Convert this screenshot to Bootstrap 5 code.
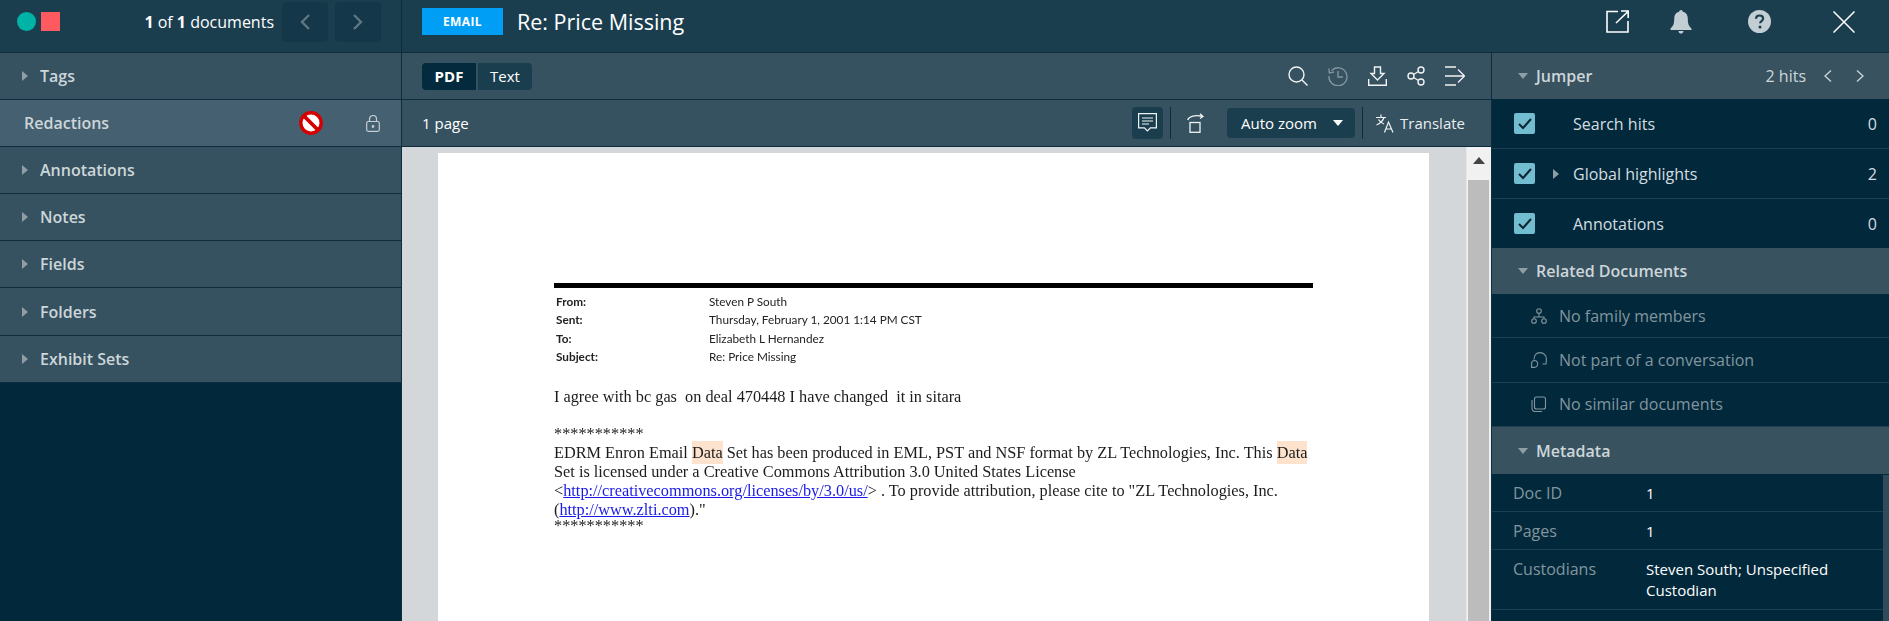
<!DOCTYPE html>
<html lang="en">
<head>
<meta charset="utf-8">
<title>Re: Price Missing</title>
<link href="https://cdn.jsdelivr.net/npm/bootstrap@5.3.0/dist/css/bootstrap.min.css" rel="stylesheet">
<style>
html,body{height:100%;overflow:hidden}
body{background:#02293b;font-family:"Open Sans","Noto Sans",sans-serif;font-size:16px;color:#fff}
svg{display:block;flex:none}
.app-top{height:53px;background:#1b3e4f;border-bottom:1px solid #0c2d3e}
.top-cell{height:52px;padding-bottom:9px}
.app-main{height:568px}
.col-left{width:402px;border-right:1px solid #0c2d3e;flex:none}
.col-mid{width:1090px;flex:none;border-right:1px solid #0c2d3e}
.col-right{width:397px;flex:none}
.logo-dot{width:19px;height:19px;border-radius:50%;background:#00b3a7;margin-left:17px}
.logo-sq{width:19px;height:19px;background:#ff5a60;margin-left:5px}
.pager{width:46px;height:40px;background:#15374a;border-radius:4px;border:0;padding:0}
.doc-type{width:81px;height:27px;background:#009ff5;font-size:12px;font-weight:700;letter-spacing:.4px}
.doc-title{font-size:21.5px;margin:0;font-weight:400;line-height:1}
.side-row{height:47.1px;background:#36515f;border-bottom:1px solid #0c2d3e;color:#cdd6da;font-weight:600;font-size:16px;padding-left:22px}
.side-row.is-active{background:#456070;padding-left:24px}
.caret-r{width:0;height:0;border-left:6px solid #8f9ea6;border-top:5.500px solid transparent;border-bottom:5.500px solid transparent;margin-right:12px}
.caret-d{width:0;height:0;border-top:6px solid #8f9ea6;border-left:5px solid transparent;border-right:5px solid transparent;margin-right:8px}
.tool-row{height:47px;background:#36515f;border-bottom:1px solid #0c2d3e}
.seg{height:27px;font-size:15px;color:#fff;width:54px;background:#1b3e4f}
.seg-on{background:#032a3d;font-weight:700;border-radius:4px 0 0 4px;margin-right:2px}
.seg-off{border-radius:0 4px 4px 0}
.cmt-btn{width:31px;height:32px;background:#1b3e4f;border-radius:4px}
.zoom-btn{width:128px;height:30px;background:#1b3e4f;border-radius:4px;padding:0 12px 0 14px;font-size:15px}
.v-div{width:1px;height:32px;background:#0c2d3e}
.viewer{height:474px;background:#d3d7da}
.pdf-page{width:991px;margin:6px 0 0 36px;background:#fff;color:#1c1c1c;padding:130px 0 0 116px;font-family:"Liberation Serif",serif;font-size:16.3px;line-height:19px;height:480px;overflow:hidden;filter:blur(.3px)}
.rule{width:759px;height:5px;background:#000;margin-bottom:5px}
.hdr{font-family:"Lato","Open Sans",sans-serif;font-size:11.75px;line-height:18.3px;color:#222;display:grid;grid-template-columns:153px 1fr;padding-left:2px;margin-bottom:21px}
.hdr b{font-weight:700}
.pdf-page p{margin:0;white-space:nowrap}
.hit{background:#fde3cd;padding:2px 0}
.pdf-page a{color:#1a1ae6}
.sb{width:25px;background:#f1f1f1;border-left:1px solid #e8e8e8}
.sb-btn{height:33px;padding-bottom:6px}
.sb-thumb{flex:1;background:#bcbcbc;margin:0 2px 0 1px}
.sec-head{background:#38525f;color:#cdd6da;font-weight:600;font-size:16px;padding:0 25px 0 26px}
.jump{height:46px}
.jump-row{height:50px;border-bottom:1px solid #1d3f50;color:#d5dde1;font-size:16px;padding:0 12px 0 22px}
.chk{width:21px;height:21px;border-radius:2px;background:#73bdd0;margin-right:16px}
.tw{width:22px}
.caret-s{width:0;height:0;border-left:6px solid #8f9ea6;border-top:5px solid transparent;border-bottom:5px solid transparent;margin-left:2px}
.rel-row{height:44.400px;border-bottom:1px solid #1d3f50;color:#82959f;font-size:16px;padding-left:39px}
.rel-row:last-child{border-bottom:0}
.rel-row svg{margin-right:12px}
.meta-wrap{height:147px;overflow:hidden;position:relative}
.meta-row{display:grid;grid-template-columns:133px 1fr;padding:8px 10px 0 21px;border-bottom:1px solid #1d3f50;font-size:15px;line-height:22px;height:38px;color:#fff}
.meta-row.two{height:60px;line-height:21px;padding-top:9px}
.meta-row span:first-child{color:#82959f;font-size:16px}
.meta-sb{position:absolute;right:0;top:1px;bottom:0;width:6px;background:#2f4c5b}
.hits{color:#cdd6da;font-weight:400;font-size:16px}
</style>
</head>
<body>
<div class="d-flex app-top">
  <div class="col-left d-flex align-items-center top-cell">
    <span class="logo-dot"></span><span class="logo-sq"></span>
    <span class="ms-auto" style="margin-right:8px"><b>1</b> of <b>1</b> documents</span>
    <button class="pager d-flex align-items-center justify-content-center" aria-label="Previous"><svg width="12" height="18" viewBox="0 0 12 18" fill="none" stroke="#5f7783" stroke-width="2.4"><path d="M10 2 3 9l7 7"/></svg></button>
    <button class="pager d-flex align-items-center justify-content-center" style="margin:0 20px 0 7px" aria-label="Next"><svg width="12" height="18" viewBox="0 0 12 18" fill="none" stroke="#5f7783" stroke-width="2.4"><path d="m2 2 7 7-7 7"/></svg></button>
  </div>
  <div class="flex-grow-1 d-flex align-items-center top-cell" style="padding-left:20px">
    <span class="doc-type d-flex align-items-center justify-content-center">EMAIL</span>
    <h1 class="doc-title" style="margin-left:14px">Re: Price Missing</h1>
    <div class="ms-auto d-flex align-items-center" style="margin-right:34px">
      <svg width="23" height="23" viewBox="0 0 23 23" fill="none" stroke="#fff" stroke-width="1.6"><path d="M12 1.5H1v20.500h21V11M10 13 22 1.500M15 1h7.200v7"/></svg>
      <svg style="margin-left:41px" width="22" height="24" viewBox="0 0 22 24" fill="#c3ced4"><path d="M11 0c1 0 1.800.8 1.800 1.800C16 2.500 17.800 5 17.800 8.500c0 5 .8 7.500 3.700 10v1.500H.500v-1.500c3-2.500 3.700-5 3.700-10C4.200 5 6 2.500 9.200 1.800 9.200.8 10 0 11 0zM8.500 21h5c0 1.500-1.100 2.600-2.500 2.600S8.500 22.500 8.500 21z"/></svg>
      <svg style="margin-left:56px" width="23" height="23" viewBox="0 0 23 23"><circle cx="11.500" cy="11.500" r="11.500" fill="#c3ced4"/><path d="M8 8.800c0-2 1.500-3.300 3.600-3.300s3.500 1.200 3.500 3c0 2.600-3 2.500-3 4.800" fill="none" stroke="#1b3e4f" stroke-width="2.200"/><circle cx="12" cy="17" r="1.500" fill="#1b3e4f"/></svg>
      <svg style="margin-left:62px" width="22" height="22" viewBox="0 0 22 22" fill="none" stroke="#fff" stroke-width="1.500"><path d="M.5.500l21 21M21.500.500l-21 21"/></svg>
    </div>
  </div>
</div>
<div class="d-flex app-main">
  <div class="col-left">
    <div class="side-row d-flex align-items-center"><span class="caret-r"></span>Tags</div>
    <div class="side-row is-active d-flex align-items-center">Redactions
      <svg style="margin-left:auto" width="24" height="24" viewBox="0 0 24 24"><circle cx="12" cy="12" r="10.200" fill="#fff" stroke="#d40000" stroke-width="3.400"/><path d="M5 5l14 14" stroke="#d40000" stroke-width="3.800"/></svg>
      <svg style="margin:0 21px 0 43px" width="14" height="17" viewBox="0 0 14 17" fill="none" stroke="#c4ced3" stroke-width="1.200"><rect x=".7" y="6.500" width="12.600" height="9.800" rx="1.500"/><path d="M3.500 6.500V4a3.500 3.500 0 0 1 7 0v2.500"/><circle cx="7" cy="11.500" r=".8" fill="#c4ced3"/></svg>
    </div>
    <div class="side-row d-flex align-items-center"><span class="caret-r"></span>Annotations</div>
    <div class="side-row d-flex align-items-center"><span class="caret-r"></span>Notes</div>
    <div class="side-row d-flex align-items-center"><span class="caret-r"></span>Fields</div>
    <div class="side-row d-flex align-items-center"><span class="caret-r"></span>Folders</div>
    <div class="side-row d-flex align-items-center"><span class="caret-r"></span>Exhibit Sets</div>
  </div>
  <div class="col-mid">
    <div class="tool-row d-flex align-items-center" style="padding-left:20px">
      <span class="seg seg-on d-flex align-items-center justify-content-center">PDF</span>
      <span class="seg seg-off d-flex align-items-center justify-content-center">Text</span>
      <div class="ms-auto d-flex align-items-center" style="margin-right:26px;gap:20px">
        <svg width="20" height="20" viewBox="0 0 20 20" fill="none" stroke="#f0f3f4" stroke-width="1.400"><circle cx="8.500" cy="8.500" r="7.500"/><path d="m14 14 5.500 5.500"/></svg>
        <svg width="20" height="20" viewBox="0 0 20 20" fill="none" stroke="#83959e" stroke-width="1.400"><path d="M3.500 4.500A9 9 0 1 1 1 10M1 2.500l.3 4.500 4.700-1M10 5v6h5"/></svg>
        <svg width="19" height="20" viewBox="0 0 19 20" fill="none" stroke="#f0f3f4" stroke-width="1.400"><path d="M.7 13v6.300h17.600V13M6.500 1h6v6.500h3.500l-6.500 6.500L3 7.500h3.500z"/></svg>
        <svg width="18" height="20" viewBox="0 0 18 20" fill="none" stroke="#f0f3f4" stroke-width="1.400"><circle cx="14" cy="4" r="3"/><circle cx="4" cy="10" r="3"/><circle cx="14" cy="16" r="3"/><path d="m6.500 8.500 5-3M6.500 11.500l5 3"/></svg>
        <svg width="20" height="20" viewBox="0 0 20 20" fill="none" stroke="#f0f3f4" stroke-width="1.300"><path d="M0 1h11M0 10h19M0 19h11M13 3.500l6.500 6.500-6.500 6.500"/></svg>
      </div>
    </div>
    <div class="tool-row d-flex align-items-center" style="padding-left:20px">
      <span style="font-size:15px">1 page</span>
      <div class="ms-auto d-flex align-items-center" style="margin-right:26px">
        <span class="cmt-btn d-flex align-items-center justify-content-center"><svg width="19" height="20" viewBox="0 0 19 20" fill="none" stroke="#f0f3f4" stroke-width="1.200"><path d="M.6.600h17.800v14.300h-6l-3 3-3-3h-5.800zM4 5h11M4 8h11M4 11h7"/></svg></span>
        <span class="v-div" style="margin-left:7px"></span>
        <svg style="margin-left:16px" width="17" height="20" viewBox="0 0 17 20" fill="none" stroke="#f0f3f4" stroke-width="1.300"><rect x="3" y="9.500" width="10" height="9.800"/><path d="M.7 7C2 3.500 8 1.500 15.500 3.500M13 .7l3 2.800-3 2"/></svg>
        <span class="zoom-btn d-flex align-items-center" style="margin-left:23px">Auto zoom<span class="caret-d ms-auto" style="margin-right:0;border-top-color:#fff"></span></span>
        <span class="v-div" style="margin-left:7px"></span>
        <svg style="margin-left:13px" width="18" height="19" viewBox="0 0 18 19" fill="none" stroke="#f0f3f4" stroke-width="1.200"><path d="M0 3.500h10M5 .5v3M8 3.500C7 7 4 9.500.5 11M2.500 5.500c1 2 3 3.500 5.500 4.500M8.500 18.500 12.500 8l4.500 10.500M10 15h6"/></svg>
        <span style="margin-left:6px;font-size:15px;color:#e9eef0">Translate</span>
      </div>
    </div>
    <div class="viewer d-flex">
      <div class="flex-grow-1 overflow-hidden">
        <div class="pdf-page">
          <div class="rule"></div>
          <div class="hdr">
            <b>From:</b><span>Steven P South</span>
            <b>Sent:</b><span>Thursday, February 1, 2001 1:14 PM CST</span>
            <b>To:</b><span>Elizabeth L Hernandez</span>
            <b>Subject:</b><span>Re: Price Missing</span>
          </div>
          <p>I agree with bc gas&nbsp; on deal 470448 I have changed&nbsp; it in sitara</p>
          <p style="margin-top:18px">***********</p>
          <p><span>EDRM Enron Email <span class="hit">Data</span> Set has been produced in EML, PST and NSF format by ZL Technologies, Inc. This <span class="hit">Data</span></span></p>
          <p>Set is licensed under a Creative Commons Attribution 3.0 United States License</p>
          <p>&lt;<a href="#">http://creativecommons.org/licenses/by/3.0/us/</a>&gt; . To provide attribution, please cite to "ZL Technologies, Inc.</p>
          <p>(<a href="#">http://www.zlti.com</a>)."</p>
          <p style="line-height:13px">***********</p>
        </div>
      </div>
      <div class="sb d-flex flex-column">
        <div class="sb-btn d-flex align-items-center justify-content-center"><svg width="12" height="7" viewBox="0 0 12 7" fill="#444"><path d="M6 0l6 7H0z"/></svg></div>
        <div class="sb-thumb"></div>
      </div>
    </div>
  </div>
  <div class="col-right">
    <div class="sec-head jump d-flex align-items-center"><span class="caret-d"></span>Jumper
      <span class="hits ms-auto">2 hits</span>
      <svg style="margin-left:18px" width="8" height="12" viewBox="0 0 8 12" fill="none" stroke="#cdd6da" stroke-width="1.300"><path d="M7 .5 1 6l6 5.500"/></svg>
      <svg style="margin-left:24px" width="8" height="12" viewBox="0 0 8 12" fill="none" stroke="#cdd6da" stroke-width="1.300"><path d="m1 .5 6 5.500-6 5.500"/></svg>
    </div>
    <div class="jump-row d-flex align-items-center"><span class="chk d-flex align-items-center justify-content-center"><svg width="14" height="12" viewBox="0 0 14 12" fill="none" stroke="#0b2533" stroke-width="2"><path d="m1 6 4 4 8-9"/></svg></span><span class="tw"></span><span>Search hits</span><span class="ms-auto">0</span></div>
    <div class="jump-row d-flex align-items-center"><span class="chk d-flex align-items-center justify-content-center"><svg width="14" height="12" viewBox="0 0 14 12" fill="none" stroke="#0b2533" stroke-width="2"><path d="m1 6 4 4 8-9"/></svg></span><span class="tw"><span class="d-block caret-s"></span></span><span>Global highlights</span><span class="ms-auto">2</span></div>
    <div class="jump-row d-flex align-items-center" style="border-bottom:0;height:49px"><span class="chk d-flex align-items-center justify-content-center"><svg width="14" height="12" viewBox="0 0 14 12" fill="none" stroke="#0b2533" stroke-width="2"><path d="m1 6 4 4 8-9"/></svg></span><span class="tw"></span><span>Annotations</span><span class="ms-auto">0</span></div>
    <div class="sec-head d-flex align-items-center" style="height:46px"><span class="caret-d"></span>Related Documents</div>
    <div class="rel-row d-flex align-items-center"><svg width="16" height="16" viewBox="0 0 16 16" fill="none" stroke="#82959f" stroke-width="1.100"><circle cx="8" cy="3" r="2.300"/><circle cx="3" cy="13" r="2.300"/><circle cx="13" cy="13" r="2.300"/><path d="M8 5.500V9M3 10.500V9h10v1.500"/></svg>No family members</div>
    <div class="rel-row d-flex align-items-center"><svg width="16" height="16" viewBox="0 0 16 16" fill="none" stroke="#82959f" stroke-width="1.100"><path d="M3 7.500C3 3 5.500.6 9 .6s6.400 2.700 6.400 6.400c0 2-.4 3.600-.4 5h-3.500"/><path d="M.6 15.400V11.500a3 3 0 0 1 6 0c0 2.200-1 3.900-3 3.900z"/></svg>Not part of a conversation</div>
    <div class="rel-row d-flex align-items-center"><svg width="16" height="16" viewBox="0 0 16 16" fill="none" stroke="#82959f" stroke-width="1.100"><rect x="3.500" y="1" width="11" height="12" rx="2"/><path d="M1 4v8.500A3 3 0 0 0 4 15.500h7"/></svg>No similar documents</div>
    <div class="sec-head d-flex align-items-center" style="height:47px"><span class="caret-d"></span>Metadata</div>
    <div class="meta-wrap">
      <div class="meta-row"><span>Doc ID</span><span>1</span></div>
      <div class="meta-row"><span>Pages</span><span>1</span></div>
      <div class="meta-row two"><span>Custodians</span><span>Steven South; Unspecified Custodian</span></div>
      <div class="meta-sb"></div>
    </div>
  </div>
</div>
<script src="https://cdn.jsdelivr.net/npm/bootstrap@5.3.0/dist/js/bootstrap.bundle.min.js"></script>
</body>
</html>
